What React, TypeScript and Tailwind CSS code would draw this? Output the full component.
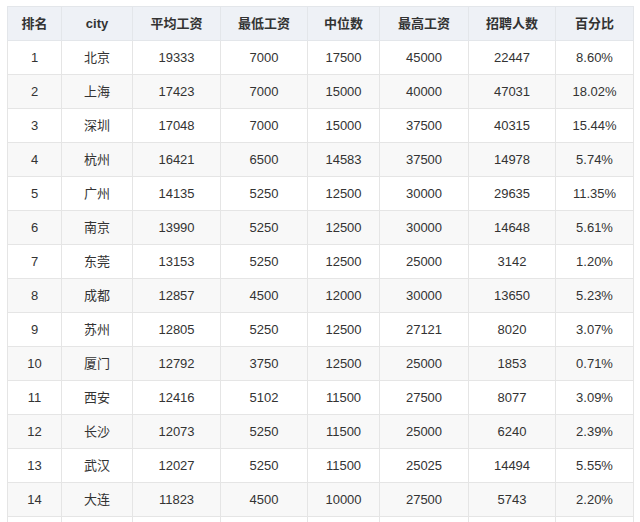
import React from 'react';

const HEADERS = ['排名', 'city', '平均工资', '最低工资', '中位数', '最高工资', '招聘人数', '百分比'];
const WIDTHS = ['w-[54px]', 'w-[71px]', 'w-[88px]', 'w-[87px]', 'w-[72px]', 'w-[89px]', 'w-[87px]', 'w-[78px]'];

const ROWS: (string | number)[][] = [
  [1, '北京', 19333, 7000, 17500, 45000, 22447, '8.60%'],
  [2, '上海', 17423, 7000, 15000, 40000, 47031, '18.02%'],
  [3, '深圳', 17048, 7000, 15000, 37500, 40315, '15.44%'],
  [4, '杭州', 16421, 6500, 14583, 37500, 14978, '5.74%'],
  [5, '广州', 14135, 5250, 12500, 30000, 29635, '11.35%'],
  [6, '南京', 13990, 5250, 12500, 30000, 14648, '5.61%'],
  [7, '东莞', 13153, 5250, 12500, 25000, 3142, '1.20%'],
  [8, '成都', 12857, 4500, 12000, 30000, 13650, '5.23%'],
  [9, '苏州', 12805, 5250, 12500, 27121, 8020, '3.07%'],
  [10, '厦门', 12792, 3750, 12500, 25000, 1853, '0.71%'],
  [11, '西安', 12416, 5102, 11500, 27500, 8077, '3.09%'],
  [12, '长沙', 12073, 5250, 11500, 25000, 6240, '2.39%'],
  [13, '武汉', 12027, 5250, 11500, 25025, 14494, '5.55%'],
  [14, '大连', 11823, 4500, 10000, 27500, 5743, '2.20%'],
  // the next row is cut off by the bottom edge of the shot
  ['', '', '', '', '', '', '', ''],
];

export default function App() {
  return (
    <div
      className="w-[640px] h-[522px] overflow-hidden bg-white pt-[6px] pl-[7px]"
      style={{ fontFamily: '"Liberation Sans", "Noto Sans CJK SC", sans-serif' }}
    >
      <table className="border-collapse table-fixed text-[13px] text-[#333]">
        <thead>
          <tr className="h-[34px] bg-[#eef1f6]">
            {HEADERS.map((h, i) => (
              <th key={h} className={`${WIDTHS[i]} border border-[#e3e6ea] text-center font-bold p-0`}>
                {h}
              </th>
            ))}
          </tr>
        </thead>
        <tbody>
          {ROWS.map((r, ri) => (
            <tr key={ri} className={`h-[34px] ${ri % 2 === 1 ? 'bg-[#f8f8f8]' : 'bg-white'}`}>
              {r.map((c, ci) => (
                <td key={ci} className="border border-[#e5e5e5] text-center p-0">
                  {c}
                </td>
              ))}
            </tr>
          ))}
        </tbody>
      </table>
    </div>
  );
}
